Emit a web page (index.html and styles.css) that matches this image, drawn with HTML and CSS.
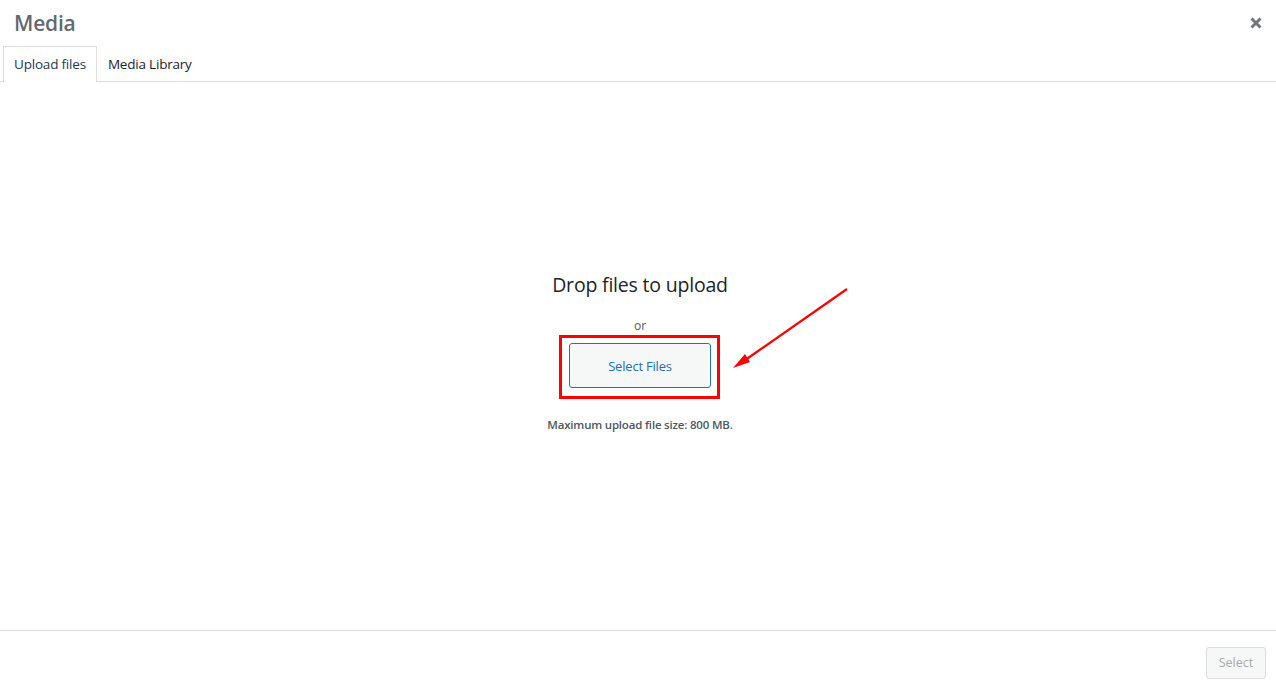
FILE: index.html
```html
<!DOCTYPE html>
<html lang="en">
<head>
    <meta charset="UTF-8">
    <title>Media</title>
    <link rel="stylesheet" href="styles.css">
</head>
<body>
    <div class="modal">
        <div class="modal-header">
            <h1>Media</h1>
            <button class="close-btn" aria-label="Close">
                <svg width="12" height="12" viewBox="0 0 12 12"><path d="M1.5 1.5 L10.5 10.5 M10.5 1.5 L1.5 10.5" stroke="#72777c" stroke-width="3"/></svg>
            </button>
        </div>

        <div class="tabs">
            <a class="tab active">Upload files</a>
            <a class="tab">Media Library</a>
        </div>

        <div class="content">
            <div class="upload">
                <h2>Drop files to upload</h2>
                <p class="or">or</p>
                <div class="btn-wrap">
                    <button class="select-files">Select Files</button>
                    <span class="highlight"></span>
                    <svg class="arrow" width="120" height="86" viewBox="0 0 120 86">
                        <line x1="116" y1="3" x2="10" y2="77" stroke="#f00" stroke-width="2.2"/>
                        <path d="M2 82 L14 68 L19 76 Z" fill="#f00"/>
                    </svg>
                </div>
                <p class="max-size">Maximum upload file size: 800 MB.</p>
            </div>
        </div>

        <div class="footer">
            <button class="select-btn" disabled>Select</button>
        </div>
    </div>
</body>
</html>
```

FILE: styles.css
```css
html, body {
    margin: 0;
    height: 100%;
}
body {
    font-family: "Open Sans", "Noto Sans", sans-serif;
    background: #fff;
    color: #1d2327;
}
.modal {
    display: flex;
    flex-direction: column;
    height: 688px;
}
.modal-header {
    display: flex;
    justify-content: space-between;
    align-items: center;
    height: 46px;
    padding: 0 12px 0 14px;
}
.modal-header h1 {
    margin: 0;
    font-size: 21px;
    font-weight: 600;
    color: #646970;
    letter-spacing: -0.2px;
}
.close-btn {
    border: none;
    background: none;
    padding: 0;
    width: 16px;
    height: 16px;
    display: flex;
    align-items: center;
    justify-content: center;
}
.tabs {
    display: flex;
    padding-left: 3px;
    border-bottom: 1px solid #dcdcde;
    height: 35px;
}
.tab {
    padding: 0 10px;
    font-size: 13.5px;
    line-height: 35px;
    color: #1d2327;
    border: 1px solid transparent;
    border-bottom: none;
    margin-bottom: -1px;
    letter-spacing: -0.2px;
}
.tab.active {
    border-color: #dcdcde;
    background: #fff;
    height: 35px;
    color: #1d3a55;
}
.content {
    flex: 1;
    display: flex;
    align-items: center;
    justify-content: center;
    padding-left: 4px;
}
.upload {
    text-align: center;
    margin-top: -8px;
}
.upload h2 {
    margin: 0;
    font-size: 19.5px;
    font-weight: 400;
    color: #1d2327;
    letter-spacing: -0.2px;
    line-height: 26px;
}
.or {
    margin: 20px 0 9px;
    font-size: 12px;
    color: #50575e;
    line-height: 16px;
}
.btn-wrap {
    position: relative;
    display: inline-block;
}
.select-files {
    width: 142px;
    height: 45px;
    border: 1px solid #2271b1;
    border-radius: 3px;
    background: #f6f7f7;
    color: #2271b1;
    font-family: inherit;
    font-size: 13px;
    letter-spacing: -0.2px;
}
.highlight {
    position: absolute;
    left: -10px;
    top: -8px;
    width: 155px;
    height: 58px;
    border: 3px solid #f00;
}
.arrow {
    position: absolute;
    left: 162px;
    top: -57px;
}
.max-size {
    margin: 29px 0 0;
    font-size: 11.5px;
    font-weight: 600;
    color: #50575e;
    letter-spacing: -0.2px;
}
.footer {
    border-top: 1px solid #dcdcde;
    height: 57px;
    display: flex;
    justify-content: flex-end;
    align-items: center;
    padding-right: 10px;
}
.select-btn {
    width: 60px;
    height: 32px;
    border: 1px solid #dcdcde;
    border-radius: 3px;
    background: #f6f7f7;
    color: #a7aaad;
    font-family: inherit;
    font-size: 12.5px;
    margin-top: 6px;
}
```
